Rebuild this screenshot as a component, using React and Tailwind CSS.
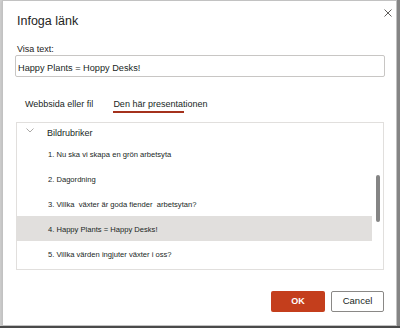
export default function App() {
  const slides = [
    "1. Nu ska vi skapa en grön arbetsyta",
    "2. Dagordning",
    "3. Villka  växter är goda fiender  arbetsytan?",
    "4. Happy Plants = Happy Desks!",
    "5. Villka värden ingjuter växter i oss?",
  ];

  return (
    <div className="w-[400px] h-[328px] flex flex-col overflow-hidden bg-[#8a8a8a] font-['Liberation_Sans',Arial,sans-serif]">
      <div className="flex h-[326px]">
        <div className="w-[2px] bg-[#cfcfcf]" />
        {/* dialog */}
        <div className="w-[395px] h-[326px] bg-white border border-[#c2c2c2] flex flex-col shadow">
          <div className="flex justify-between pl-[14px] pr-[4px]">
            <h1 className="mt-[12px] text-[12.5px] leading-[16px] text-[#252423]">Infoga länk</h1>
            <button className="mt-[8px] w-[8px] h-[8px] flex">
              <svg width="8" height="8" viewBox="0 0 8 8">
                <path d="M0.5 0.5 L7.5 7.5 M7.5 0.5 L0.5 7.5" stroke="#605e5c" strokeWidth="1" />
              </svg>
            </button>
          </div>

          <div className="flex flex-col pl-[12px] pr-[11px]">
            <label className="mt-[15px] ml-[2px] text-[9px] leading-[11px] text-[#252423]">Visa text:</label>
            <div className="h-[22px] border border-[#c8c6c4] rounded-[2px] pl-[2px] pt-[7px] text-[9.2px] leading-[11px] text-[#201f1e]">
              Happy Plants = Hoppy Desks!
            </div>

            {/* tabs */}
            <div className="flex gap-[20px] ml-[10px] mt-[22px] text-[9px] leading-[11px] text-[#201f1e]">
              <div className="flex flex-col">
                <span>Webbsida eller fil</span>
              </div>
              <div className="flex flex-col">
                <span>Den här presentationen</span>
                <div className="mt-[1px] w-[71px] h-[2px] bg-[#a4311c]" />
              </div>
            </div>

            {/* slide list */}
            <div className="mt-[9px] mx-[1px] h-[148px] border border-[#e1dfdd] flex overflow-hidden">
              <div className="w-[355px] flex flex-col">
                <div className="h-[18px] flex items-center shrink-0">
                  <svg className="ml-[9px] -mt-[4px]" width="8" height="5" viewBox="0 0 8 5">
                    <path d="M0.5 0.5 L4 4 L7.5 0.5" fill="none" stroke="#a19f9d" strokeWidth="0.9" />
                  </svg>
                  <span className="ml-[13px] mt-[2px] text-[9px] leading-[11px] text-[#201f1e]">Bildrubriker</span>
                </div>
                {slides.map((s, i) => (
                  <div
                    key={i}
                    className={`h-[25px] shrink-0 flex items-center pl-[31px] pt-[2px] text-[7.6px] leading-[10px] text-[#201f1e] whitespace-pre ${i === 3 ? "bg-[#e1dfdd]" : ""}`}
                  >
                    {s}
                  </div>
                ))}
              </div>
              <div className="ml-[4px] mt-[52px] w-[4px] h-[47px] rounded-full bg-[#858585]" />
            </div>

            {/* buttons */}
            <div className="mt-[21px] mr-[1px] flex justify-end gap-[6px]">
              <button className="w-[54px] h-[21px] rounded-[2px] bg-[#c43e1c] text-white text-[9px] font-semibold">
                OK
              </button>
              <button className="w-[53px] h-[21px] rounded-[2px] border border-[#8a8886] bg-white text-[#201f1e] text-[9.5px]">
                Cancel
              </button>
            </div>
          </div>
        </div>
        <div className="flex-1 bg-[#858585]" />
      </div>
      <div className="flex-1 bg-[#4a4a4a]" />
    </div>
  );
}
